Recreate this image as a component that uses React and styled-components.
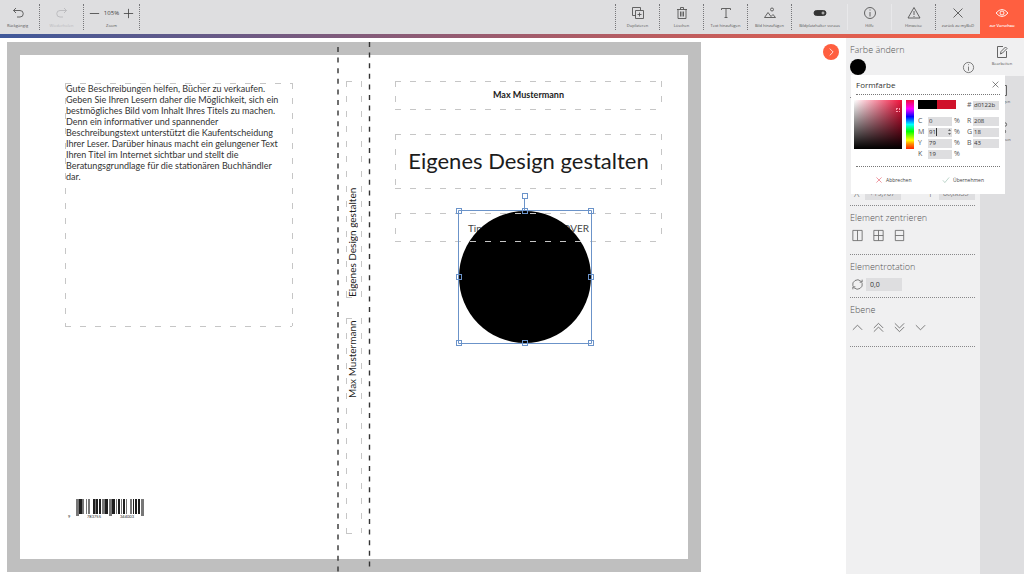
import React, { useState } from "react";
import styled, { createGlobalStyle, css } from "styled-components";

const Global = createGlobalStyle`
  *, *::before, *::after { box-sizing: border-box; }
  body { margin: 0; background: #fff; font-family: "Open Sans", "Noto Sans", sans-serif; color: #555; overflow: hidden; }
  button, input { font: inherit; color: inherit; border: 0; padding: 0; margin: 0; background: none; border-radius: 0; }
  h1, h2, p { margin: 0; font-weight: inherit; font-size: inherit; }
`;

const Page = styled.div`
  min-height: 100vh;
  display: flex;
  flex-direction: column;
`;

const Toolbar = styled.header`
  display: flex;
  justify-content: space-between;
  background: linear-gradient(#dedee0, #dedee0) top / 100% 34px no-repeat,
    linear-gradient(90deg, #40599a, #ff5f40);
  height: 38px;
`;

const ToolGroup = styled.div`
  display: flex;
  align-items: flex-start;
`;

const toolBase = css`
  display: flex;
  flex-direction: column;
  align-items: center;
  gap: 3px;
  height: 26px;
  margin-top: 4px;
  padding-top: 2px;
  font-size: 4px;
  line-height: 6px;
  white-space: nowrap;
  color: #555;
`;

const toolLines = {
  soft: "solid #e8e8ea",
  none: "solid transparent",
  dotted: "dotted #77777a",
};

const Tool = styled.button`
  ${toolBase}
  width: ${(p) => p.$width || 44}px;
  margin-right: ${(p) => p.$after || 0}px;
  border-left: 1px ${(p) => toolLines[p.$line || "dotted"]};
  color: ${(p) => (p.disabled ? "#b9b9bc" : "#555")};
`;

const ZoomTool = styled.div`
  ${toolBase}
  width: 57px;
  border-left: 1px dotted #77777a;
  border-right: 1px dotted #77777a;
`;

const ZoomRow = styled.div`
  display: flex;
  align-items: center;
  gap: 3px;
  height: 14px;
  font-size: 6px;
  color: #444;
  button { display: flex; }
`;

const Preview = styled.button`
  ${toolBase}
  width: 44px;
  height: 38px;
  margin-top: 0;
  padding-top: 6px;
  background: #ff5f40;
  color: #fff;
  font-weight: 600;
`;

const Svg = styled.svg`
  display: block;
  flex: none;
  fill: none;
  stroke: currentColor;
  stroke-width: 0.9;
`;

const Main = styled.main`
  flex: 1;
  display: flex;
`;

const Stage = styled.section`
  flex: 1;
  min-width: 0;
  display: flex;
  justify-content: space-between;
  align-items: flex-start;
  padding: 4px 7px 2px;
`;

const Toggle = styled.button`
  width: 16px;
  height: 16px;
  margin: 2px 0 0;
  border-radius: 50%;
  background: #ff5f40;
  color: #fff;
  display: grid;
  place-items: center;
`;

const Cover = styled.div`
  position: relative;
  flex: none;
  width: 694px;
  height: 530px;
  border: 13px solid #bfbfbf;
  background: #fff;
  font-family: Lato, sans-serif;
  color: #1c1c1c;
`;

const CoverText = styled.p`
  position: absolute;
  left: ${(p) => p.$x}px;
  top: ${(p) => p.$y}px;
  width: ${(p) => p.$w}px;
  height: ${(p) => p.$h}px;
  font-size: ${(p) => p.$size}px;
  line-height: ${(p) => p.$leading}px;
  font-weight: ${(p) => p.$weight || 400};
  text-align: ${(p) => p.$align || "center"};
  color: ${(p) => p.$color || "#1c1c1c"};
`;

const SpineText = styled(CoverText)`
  writing-mode: vertical-rl;
  transform: rotate(180deg);
  white-space: nowrap;
`;

const Artwork = styled.svg`
  position: absolute;
  left: -13px;
  top: -13px;
  overflow: visible;
  fill: none;
`;

const Panel = styled.aside`
  position: relative;
  width: 134px;
  flex: none;
  padding: 0 5px 0 4px;
  background: #f0f0f1;
`;

const Section = styled.section`
  height: ${(p) => p.$h}px;
  padding-top: 6px;
  display: flex;
  flex-direction: column;
  gap: 3px;
  border-bottom: 1px dotted #88888a;
`;

const Heading = styled.h2`
  font-size: 9px;
  line-height: 12px;
  font-weight: 300;
  color: #555;
`;

const Row = styled.div`
  display: flex;
  align-items: center;
  gap: ${(p) => p.$gap || 0}px;
  justify-content: ${(p) => p.$justify || "flex-start"};
  height: 16px;
  color: #666;
`;

const IconButton = styled.button`
  display: grid;
  place-items: center;
  width: ${(p) => p.$w || 14}px;
  height: 14px;
`;

const Swatch = styled.button`
  width: 16px;
  height: 16px;
  border-radius: 50%;
  background: #000;
`;

const PanelInput = styled.input`
  width: 36px;
  height: 13px;
  padding: 0 4px;
  background: #dedee0;
  font-size: 7px;
  color: #333;
`;

const PositionSection = styled(Section)`
  justify-content: flex-end;
  padding-bottom: 4px;
`;

const Field = styled.label`
  display: flex;
  align-items: center;
  gap: 6px;
  padding-left: 4px;
  font-size: 10px;
  font-weight: 300;
`;

const Rail = styled.nav`
  width: 44px;
  flex: none;
  background: #dedee0;
`;

const RailTab = styled.button`
  display: flex;
  flex-direction: column;
  align-items: center;
  gap: 2px;
  width: 100%;
  height: 38px;
  padding-top: 7px;
  font-size: 4px;
  line-height: 6px;
  color: #555;
  background: ${(p) => (p.$active ? "#f0f0f1" : "transparent")};
`;

const Popup = styled.div`
  position: absolute;
  left: 5px;
  top: 37px;
  z-index: 2;
  width: 154px;
  height: 119px;
  padding: 0 3px;
  background: #fff;
`;

const PopupHead = styled.div`
  display: flex;
  justify-content: space-between;
  align-items: center;
  height: 20px;
  margin: 0 2px 5px;
  border-bottom: 1px dotted #777;
  font-size: 8px;
  color: #333;
`;

const Picker = styled.div`
  display: flex;
  gap: 4px;
  height: 66px;
`;

const Shade = styled.div`
  flex: none;
  width: 48px;
  height: 49px;
  padding: 8px 2px;
  display: flex;
  justify-content: flex-end;
  background: linear-gradient(transparent, #000), linear-gradient(90deg, #fff, #f0103a);
`;

const ShadeMark = styled.span`
  width: 4px;
  height: 4px;
  border: 1px dotted #ff9db0;
`;

const Hue = styled.div`
  flex: none;
  width: 8px;
  height: 49px;
  background: linear-gradient(#f0103a, #f0f 18%, #00f 34%, #0ff 50%, #0f0 64%, #ff0 82%, #f80 90%, #f20);
`;

const Values = styled.div`
  display: grid;
  grid-template-columns: 42px 34px;
  column-gap: 7px;
  grid-template-rows: 15px repeat(4, 10px);
  row-gap: 1px;
`;

const Compare = styled.div`
  width: 38px;
  height: 9px;
  background: linear-gradient(90deg, #000 50%, #d0122b 50%);
`;

const Value = styled.label`
  position: relative;
  display: flex;
  align-items: center;
  height: 10px;
  font-size: 7px;
  line-height: 10px;
  color: #555;
`;

const ValueName = styled.span`
  width: ${(p) => p.$w}px;
`;

const ValueInput = styled.input`
  width: ${(p) => p.$w || 24}px;
  height: 9px;
  margin-right: 2px;
  padding: 0 1px;
  background: #dedee0;
  font-size: 6px;
  color: #333;
`;

const EditMarks = styled(Svg)`
  position: absolute;
  left: 10px;
  top: 0;
  pointer-events: none;
`;

const PopupFoot = styled.div`
  display: flex;
  justify-content: space-between;
  align-items: center;
  height: 27px;
  margin: 0 2px;
  padding: 0 16px 0 19px;
  border-top: 1px dotted #777;
`;

const Action = styled.button`
  display: flex;
  align-items: center;
  gap: 3px;
  font-size: 5px;
  line-height: 8px;
  color: #444;
  svg { color: ${(p) => p.$tone}; }
`;

const paths = {
  undo: <path d="M2.500 4.500h6.500a3 3 0 0 1 0 6.500h-3M5 2 2.500 4.500 5 7" />,
  redo: <path d="M11.500 4.500h-6.500a3 3 0 0 0 0 6.500h3M9 2l2.500 2.500L9 7" />,
  copy: <path d="M4.500 4.500h8v8h-8zM4.500 9.500h-3v-8h8v3M8.500 6.500v4M6.500 8.500h4" />,
  trash: <path d="M2 3.500h10M5.500 3.500v-2h3v2M3 3.500v9h8v-9M5.500 5.500v5M7 5.500v5M8.500 5.500v5" />,
  text: <path d="M2.500 4V2.500h9V4M7 2.500v9M5.500 11.500h3" />,
  image: <path d="M1.500 11.500h11M1.500 11.500 5 6.500l3 4 2-2 2.500 3M7.500 3.500a1.500 1.500 0 1 0 3 0a1.500 1.500 0 1 0-3 0" />,
  toggle: (
    <>
      <rect x="1" y="4.500" width="12" height="5" rx="2.500" fill="#333" stroke="#333" />
      <path d="M8.500 7h3M10 5.500v3" stroke="#ddd" />
    </>
  ),
  info: <path d="M7 1.500a5.500 5.500 0 1 0 0 11a5.500 5.500 0 1 0 0-11M7 6v4.500M7 3.500v1" />,
  warn: <path d="M7 1.500 1 12h12zM7 5v4M7 10v1" />,
  close: <path d="m2.500 2.500 9 9M11.500 2.500l-9 9" />,
  eye: <path d="M1 7q6-7 12 0q-6 7-12 0M7 5a2 2 0 1 0 0 4a2 2 0 1 0 0-4" />,
  minus: <path d="M2 7h10" />,
  plus: <path d="M2 7h10M7 2v10" />,
  next: <path d="m5.500 3 4 4-4 4" />,
  edit: <path d="M8 1.500H2.500v11h9V6M5.500 9l.5-2.500L10.500 2l1.500 1.500L7.500 8z" />,
  page: <path d="M3.500 2.500h8v10h-8z" />,
  options: <path d="M2 3.500h6M8 3.500a1.800 1.800 0 1 0 3.600 0a1.800 1.800 0 1 0-3.600 0M2 10.500h5M7 10.500a1.800 1.800 0 1 0 3.600 0a1.800 1.800 0 1 0-3.600 0" />,
  colV: <path d="M2 1.500h10v11h-10zM7 1.500v11" />,
  colBoth: <path d="M2 1.500h10v11h-10zM7 1.500v11M2 7h10" />,
  colH: <path d="M2.500 1.500h9v11h-9zM2.500 7h9" />,
  rotate: <path d="M2 8.500a5.200 5.200 0 0 1 8.500-5.200l1 1M12 1.800v2.700H9.300M12 5.500a5.200 5.200 0 0 1-8.500 5.200l-1-1M2 12.200V9.500h2.700" />,
  up: <path d="m2 9.500 5-5 5 5" />,
  top: <path d="m2 7.500 5-5 5 5M2 11.500l5-5 5 5" />,
  bottom: <path d="m2 2.500 5 5 5-5M2 6.500l5 5 5-5" />,
  down: <path d="m2 4.500 5 5 5-5" />,
  check: <path d="m1.500 7.500 3.500 4 7.500-9" />,
};

const Icon = ({ name, size = 14 }) => (
  <Svg width={size} height={size} viewBox="0 0 14 14" aria-hidden="true">{paths[name]}</Svg>
);

const tools = [
  { icon: "copy", label: "Duplizieren" },
  { icon: "trash", label: "Löschen" },
  { icon: "text", label: "Text hinzufügen" },
  { icon: "image", label: "Bild hinzufügen" },
  { icon: "toggle", label: "Bildplatzhalter voraus", width: 56 },
  { icon: "info", label: "Hilfe", line: "soft" },
  { icon: "warn", label: "Hinweise", line: "soft" },
  { icon: "close", label: "zurück zu myBoD", width: 45 },
];

const guides = [
  [58, 41, 227, 243],
  [339, 39, 15, 216],
  [339, 276, 15, 215],
  [388, 39, 266, 28],
  [388, 92, 266, 54],
  [388, 171, 266, 28],
];

const handles = [
  [452, 169], [518, 169], [584, 169],
  [452, 235], [584, 235],
  [452, 301], [518, 301], [584, 301],
  [518, 154],
];

const black = "#1e1e1e";
const grey = "#777";
const bars = [
  [69, 3, grey, 17], [72, 3, black], [75, 2, grey], [79, 1, grey], [81, 2, grey], [86, 2, black], [88, 1, grey],
  [89, 2, black], [92, 2, black], [95, 3, grey], [98, 3, black], [102, 3, grey, 17], [105, 3, black], [109, 1, grey],
  [111, 2, black], [114, 1, grey], [116, 2, black], [119, 1, grey], [123, 2, grey], [126, 1, black], [128, 2, black],
  [131, 2, black], [134, 3, grey, 17],
];

const CoverArtwork = () => (
  <Artwork width="694" height="530" viewBox="0 0 694 530" aria-hidden="true">
    <circle cx="518" cy="235" r="66" fill="#000" />
    <g stroke="#c6c6c6" strokeDasharray="6 9">
      {guides.map(([x, y, w, h]) => (
        <path key={`${x}-${y}`} d={`M${x} ${y + 0.5}h${w}M${x} ${y + h + 0.5}h${w}M${x + 0.5} ${y}v${h}M${x + w + 0.5} ${y}v${h}`} />
      ))}
    </g>
    <path d="M331 5v525M362.500 0v526" stroke="#333" strokeWidth="1.400" strokeDasharray="5 5.600" />
    <path d="M451.500 168.500h133v133h-133zM517.500 168v-12" stroke="#6b93c9" />
    <g stroke="#6b93c9">
      {handles.map(([x, y]) => (
        <rect key={`${x}-${y}`} x={x - 2.5} y={y - 2.5} width="5" height="5" />
      ))}
    </g>
    {bars.map(([x, w, tone, h = 15]) => (
      <rect key={x} x={x} y="457" width={w} height={h} fill={tone} />
    ))}
  </Artwork>
);

const cmyk = [["C", "0"], ["M", "91"], ["Y", "79"], ["K", "19"]];
const rgb = [["R", "208"], ["G", "18"], ["B", "43"]];

const ColorPopup = () => (
  <Popup role="dialog" aria-label="Formfarbe">
    <PopupHead>
      <h2>Formfarbe</h2>
      <IconButton $w={9} aria-label="Schließen"><Icon name="close" size={9} /></IconButton>
    </PopupHead>
    <Picker>
      <Shade><ShadeMark /></Shade>
      <Hue />
      <Values>
        <Compare />
        <Value><ValueName $w={8}>#</ValueName><ValueInput $w={26} defaultValue="d0122b" /></Value>
        {cmyk.map(([name, value], i) => (
          <React.Fragment key={name}>
            <Value>
              <ValueName $w={10}>{name}</ValueName>
              <ValueInput defaultValue={value} />%
              {name === "M" && (
                <EditMarks width="24" height="10" viewBox="0 0 24 10" aria-hidden="true">
                  <path d="M8.500 1v8" stroke="#222" />
                  <path d="m20 4 1.500-2L23 4zM20 6l1.500 2L23 6z" fill="#666" stroke="none" />
                </EditMarks>
              )}
            </Value>
            {rgb[i] ? (
              <Value><ValueName $w={8}>{rgb[i][0]}</ValueName><ValueInput $w={26} defaultValue={rgb[i][1]} /></Value>
            ) : <i />}
          </React.Fragment>
        ))}
      </Values>
    </Picker>
    <PopupFoot>
      <Action $tone="#e0394a"><Icon name="close" size={8} />Abbrechen</Action>
      <Action $tone="#7fae9a"><Icon name="check" size={8} />Übernehmen</Action>
    </PopupFoot>
  </Popup>
);

export default function App() {
  const [open] = useState(true);
  return (
    <Page>
      <Global />
      <Toolbar>
        <ToolGroup>
          <Tool $width={34} $after={5} $line="none"><Icon name="undo" />Rückgängig</Tool>
          <Tool disabled><Icon name="redo" />Wiederholen</Tool>
          <ZoomTool>
            <ZoomRow>
              <button aria-label="Verkleinern"><Icon name="minus" size={13} /></button>
              105%
              <button aria-label="Vergrößern"><Icon name="plus" size={13} /></button>
            </ZoomRow>
            Zoom
          </ZoomTool>
        </ToolGroup>
        <ToolGroup>
          {tools.map((t) => (
            <Tool key={t.icon} $width={t.width} $line={t.line}><Icon name={t.icon} />{t.label}</Tool>
          ))}
          <Preview><Icon name="eye" />zur Vorschau</Preview>
        </ToolGroup>
      </Toolbar>
      <Main>
        <Stage>
          <Cover>
            <CoverText $x={46} $y={28} $w={222} $h={243} $size={9} $leading={11} $align="left" $color="#333">
              Gute Beschreibungen helfen, Bücher zu verkaufen. Geben Sie Ihren Lesern daher die Möglichkeit, sich ein
              bestmögliches Bild vom Inhalt Ihres Titels zu machen. Denn ein informativer und spannender
              Beschreibungstext unterstützt die Kaufentscheidung Ihrer Leser. Darüber hinaus macht ein gelungener Text
              Ihren Titel im Internet sichtbar und stellt die Beratungsgrundlage für die stationären Buchhändler dar.
            </CoverText>
            <SpineText $x={325} $y={26} $w={15} $h={216} $size={10} $leading={15} $align="left">Eigenes Design gestalten</SpineText>
            <SpineText $x={325} $y={263} $w={15} $h={80} $size={10} $leading={15} $align="left">Max Mustermann</SpineText>
            <CoverText $x={375} $y={26} $w={267} $h={28} $size={9} $leading={28} $weight={700}>Max Mustermann</CoverText>
            <CoverText $x={375} $y={79} $w={267} $h={54} $size={22} $leading={54}>Eigenes Design gestalten</CoverText>
            <CoverText $x={375} $y={159} $w={267} $h={28} $size={10} $leading={28} $color="#444">Tipps und Tricks für COVER</CoverText>
            <CoverText $x={48} $y={459} $w={4} $h={5} $size={4} $leading={5} $align="left">9</CoverText>
            <CoverText $x={66} $y={459} $w={16} $h={5} $size={4} $leading={5}>783755</CoverText>
            <CoverText $x={99} $y={459} $w={16} $h={5} $size={4} $leading={5}>344003</CoverText>
            <CoverArtwork />
          </Cover>
          <Toggle aria-label="Seitenleiste einklappen"><Icon name="next" size={12} /></Toggle>
        </Stage>
        <Panel>
          <Section $h={60}>
            <Heading>Farbe ändern</Heading>
            <Row $justify="space-between">
              <Swatch aria-label="Farbe wählen" />
              <IconButton aria-label="Info"><Icon name="info" size={13} /></IconButton>
            </Row>
          </Section>
          <PositionSection $h={108}>
            <Row $justify="space-between">
              <Field>X<PanelInput defaultValue="+19,767" /></Field>
              <Field>Y<PanelInput defaultValue="60,8853" /></Field>
            </Row>
          </PositionSection>
          <Section $h={49}>
            <Heading>Element zentrieren</Heading>
            <Row $gap={7}>
              <IconButton aria-label="Horizontal zentrieren"><Icon name="colV" size={13} /></IconButton>
              <IconButton aria-label="Beide zentrieren"><Icon name="colBoth" size={13} /></IconButton>
              <IconButton aria-label="Vertikal zentrieren"><Icon name="colH" size={13} /></IconButton>
            </Row>
          </Section>
          <Section $h={43}>
            <Heading>Elementrotation</Heading>
            <Row $gap={2}>
              <IconButton aria-label="Drehen"><Icon name="rotate" size={13} /></IconButton>
              <PanelInput aria-label="Elementrotation" defaultValue="0,0" />
            </Row>
          </Section>
          <Section $h={49}>
            <Heading>Ebene</Heading>
            <Row $gap={7}>
              <IconButton aria-label="Nach vorne"><Icon name="up" size={13} /></IconButton>
              <IconButton aria-label="Ganz nach vorne"><Icon name="top" size={13} /></IconButton>
              <IconButton aria-label="Ganz nach hinten"><Icon name="bottom" size={13} /></IconButton>
              <IconButton aria-label="Nach hinten"><Icon name="down" size={13} /></IconButton>
            </Row>
          </Section>
          {open && <ColorPopup />}
        </Panel>
        <Rail>
          <RailTab $active><Icon name="edit" />Bearbeiten</RailTab>
          <RailTab><Icon name="page" />Vorlagen</RailTab>
          <RailTab><Icon name="options" />Optionen</RailTab>
        </Rail>
      </Main>
    </Page>
  );
}
